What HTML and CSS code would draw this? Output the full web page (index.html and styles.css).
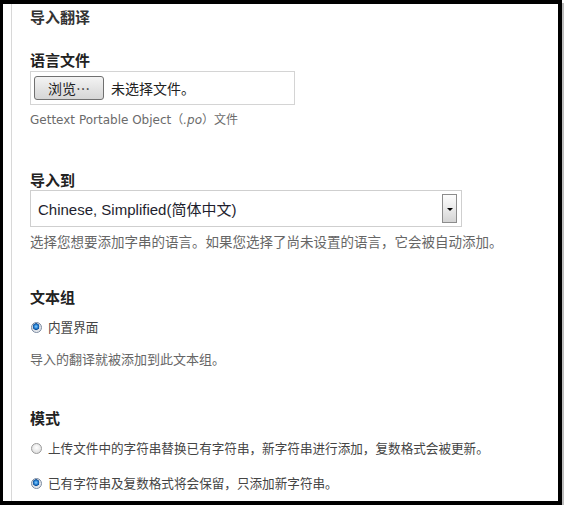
FILE: index.html
```html
<!DOCTYPE html>
<html lang="zh-CN">
<head>
    <meta charset="UTF-8">
    <meta name="viewport" content="width=device-width, initial-scale=1.0">
    <title>导入翻译</title>
    <link rel="stylesheet" href="styles.css">
</head>
<body>
    <div class="frame">
        <div class="content">
            <h2 class="title">导入翻译</h2>

            <div class="field field-file">
                <label class="label">语言文件</label>
                <div class="file-box">
                    <span class="file-btn">浏览…</span>
                    <span class="file-name">未选择文件。</span>
                </div>
                <div class="desc desc-po">Gettext Portable Object（<em>.po</em>）文件</div>
            </div>

            <div class="field field-lang">
                <label class="label">导入到</label>
                <div class="select">
                    <span class="select-text">Chinese, Simplified(简体中文)</span>
                    <span class="select-arrow"></span>
                </div>
                <div class="desc">选择您想要添加字串的语言。如果您选择了尚未设置的语言，它会被自动添加。</div>
            </div>

            <div class="field field-group">
                <label class="label">文本组</label>
                <div class="radio-row"><span class="radio checked"></span>内置界面</div>
                <div class="desc desc-group">导入的翻译就被添加到此文本组。</div>
            </div>

            <div class="field field-mode">
                <label class="label">模式</label>
                <div class="radio-row"><span class="radio"></span>上传文件中的字符串替换已有字符串，新字符串进行添加，复数格式会被更新。</div>
                <div class="radio-row radio-second"><span class="radio checked"></span>已有字符串及复数格式将会保留，只添加新字符串。</div>
            </div>
        </div>
    </div>
</body>
</html>
```

FILE: styles.css
```css
body { margin: 0; background: #fff; font-family: "Noto Sans CJK SC", "DejaVu Sans", sans-serif; color: #333; }

.frame { width: 562px; height: 505px; box-sizing: border-box; border: 4px solid #000; border-left-width: 3px; box-shadow: 2px 3px 0 #bdbdbd; overflow: hidden; background: #fff; }
.content { margin-left: 8px; height: 100%; border-left: 1px solid #d8d8d8; padding: 3px 0 0 18px; }

.title { margin: 0; font-size: 15px; line-height: 20px; font-weight: bold; color: #333; }
.label { display: block; font-size: 15px; line-height: 20px; font-weight: bold; color: #222; }

.field-file { margin-top: 23px; }
.field-lang { margin-top: 41px; }
.field-group { margin-top: 37px; }
.field-mode { margin-top: 40px; }

.file-box { margin-top: 1px; width: 265px; height: 34px; box-sizing: border-box; border: 1px solid #d4d4d4; display: flex; align-items: center; padding-left: 3px; gap: 7px; }
.file-btn { width: 70px; height: 24px; box-sizing: border-box; border: 1px solid #707070; border-radius: 3px; background: linear-gradient(#f4f4f4, #e4e4e4 50%, #d6d6d6); font-size: 14px; line-height: 22px; text-align: center; color: #222; }
.file-name { font-size: 14px; color: #222; }

.desc { margin-top: 5px; font-size: 13.5px; line-height: 18px; color: #666; }
.desc-po { margin-top: 6px; font-family: "DejaVu Sans", "Noto Sans CJK SC", sans-serif; font-size: 12px; color: #6b6b6b; }
.desc-po em { font-style: italic; }
.desc-group { margin-top: 13px; font-size: 13px; }

.select { width: 432px; height: 37px; box-sizing: border-box; border: 1px solid #cfcfcf; display: flex; align-items: center; justify-content: space-between; padding: 0 4px 0 7px; }
.select-text { font-family: "Liberation Sans", "Noto Sans CJK SC", sans-serif; font-size: 15px; color: #1e1e2e; }
.select-arrow { width: 15px; height: 29px; box-sizing: border-box; border: 1px solid #8c8c8c; background: linear-gradient(#fdfdfd, #e6e6e6 60%, #d4d4d4); position: relative; }
.select-arrow::after { content: ""; position: absolute; left: 4px; top: 13px; border-left: 3px solid transparent; border-right: 3px solid transparent; border-top: 3px solid #000; }

.radio-row { margin-top: 10px; display: flex; align-items: center; gap: 6px; font-size: 12.6px; line-height: 20px; color: #444; padding-left: 1px; }
.radio-second { margin-top: 15px; }
.radio { width: 11px; height: 11px; box-sizing: border-box; border-radius: 50%; border: 1px solid #9a9a9a; background: radial-gradient(circle at 50% 40%, #ffffff, #e2e2e2 70%, #cfcfcf); flex: none; }
.radio.checked { border-color: #7a8aa0; background: radial-gradient(circle at 45% 40%, #8fd0ff 0, #2a86d6 25%, #0a4c98 42%, #d9dde3 48%, #eef0f3 80%); }
```
